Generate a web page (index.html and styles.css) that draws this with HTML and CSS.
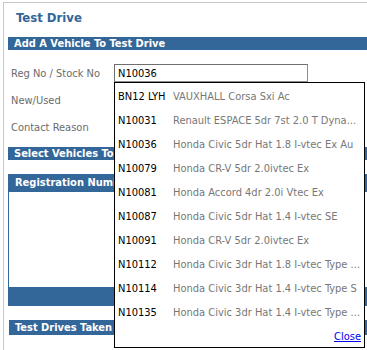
FILE: index.html
```html
<!DOCTYPE html>
<html lang="en">

<head>
    <meta charset="UTF-8">
    <meta name="viewport" content="width=device-width, initial-scale=1.0">
    <title>Test Drive</title>
    <link rel="stylesheet" href="styles.css">
</head>

<body>
    <div class="page">
        <h1 class="title">Test Drive</h1>

        <div class="bar">Add A Vehicle To Test Drive</div>

        <div class="form">
            <div class="row">
                <label class="label">Reg No / Stock No</label>
                <div class="field">
                    <input class="input" type="text" value="N10036">
                    <div class="dropdown">
                        <ul class="list">
                            <li><span class="reg">BN12 LYH</span><span class="desc">VAUXHALL Corsa Sxi Ac</span></li>
                            <li><span class="reg">N10031</span><span class="desc">Renault ESPACE 5dr 7st 2.0 T Dyna...</span></li>
                            <li><span class="reg">N10036</span><span class="desc">Honda Civic 5dr Hat 1.8 I-vtec Ex Au</span></li>
                            <li><span class="reg">N10079</span><span class="desc">Honda CR-V 5dr 2.0ivtec Ex</span></li>
                            <li><span class="reg">N10081</span><span class="desc">Honda Accord 4dr 2.0i Vtec Ex</span></li>
                            <li><span class="reg">N10087</span><span class="desc">Honda Civic 5dr Hat 1.4 I-vtec SE</span></li>
                            <li><span class="reg">N10091</span><span class="desc">Honda CR-V 5dr 2.0ivtec Ex</span></li>
                            <li><span class="reg">N10112</span><span class="desc">Honda Civic 3dr Hat 1.8 I-vtec Type ...</span></li>
                            <li><span class="reg">N10114</span><span class="desc">Honda Civic 3dr Hat 1.4 I-vtec Type S</span></li>
                            <li><span class="reg">N10135</span><span class="desc">Honda Civic 3dr Hat 1.4 I-vtec Type ...</span></li>
                        </ul>
                        <div class="close"><a href="#">Close</a></div>
                    </div>
                </div>
            </div>
            <div class="row">
                <label class="label">New/Used</label>
            </div>
            <div class="row">
                <label class="label">Contact Reason</label>
            </div>
        </div>

        <div class="bar">Select Vehicles To Test Drive</div>

        <div class="panel">
            <div class="panel-head">Registration Number</div>
            <div class="panel-body"></div>
            <div class="panel-foot"></div>
        </div>

        <div class="bar bar-last">Test Drives Taken</div>
    </div>
</body>

</html>
```

FILE: styles.css
```css
* {
    padding: 0;
    margin: 0;
    box-sizing: border-box;
}

body {
    font-family: "DejaVu Sans Condensed", "Liberation Sans", sans-serif;
    font-size: 11px;
    color: #000;
    background-color: #fff;
    overflow: hidden;
}

.page {
    width: 400px;
    height: 360px;
    margin: 2px 0 0 3px;
    padding: 0 0 0 4px;
    border-top: 1px solid #c8c8c8;
    border-left: 1px solid #c8c8c8;
}

.title {
    height: 34px;
    padding: 7px 0 0 8px;
    font-size: 13px;
    font-weight: bold;
    color: #336699;
}

.bar {
    height: 13px;
    line-height: 13px;
    padding-left: 6px;
    font-size: 11px;
    font-weight: bold;
    color: #fff;
    background-color: #336699;
    white-space: nowrap;
}

.form {
    padding: 14px 0 11px 3px;
    display: flex;
    flex-direction: column;
    gap: 9px;
}

.row {
    height: 18px;
    display: flex;
    align-items: center;
}

.label {
    width: 103px;
    color: #6b6b6b;
}

.field {
    position: relative;
}

.input {
    display: block;
    width: 194px;
    height: 18px;
    padding: 0 3px;
    border: 1px solid #8c8c8c;
    border-top-color: #6f6f6f;
    border-left-color: #6f6f6f;
    font-family: inherit;
    font-size: 11px;
    color: #000;
    outline: none;
}

.dropdown {
    position: absolute;
    top: 18px;
    left: 0;
    z-index: 100;
    width: 251px;
    height: 266px;
    padding-top: 1px;
    background-color: #fff;
    border: 1px solid #000;
    font-size: 11px;
}

.list {
    list-style: none;
}

.list li {
    height: 24px;
    display: flex;
    align-items: center;
    padding-left: 3px;
    white-space: nowrap;
    overflow: hidden;
}

.reg {
    width: 55px;
    flex-shrink: 0;
    color: #000;
}

.desc {
    color: #777;
}

.close {
    height: 24px;
    display: flex;
    align-items: center;
    justify-content: flex-end;
    padding-right: 3px;
}

.close a {
    color: #0000ee;
}

.panel {
    margin-top: 14px;
}

.panel-head {
    height: 18px;
    line-height: 18px;
    padding-left: 7px;
    font-size: 11px;
    font-weight: bold;
    color: #fff;
    background-color: #336699;
    white-space: nowrap;
}

.panel-body {
    height: 95px;
    border-left: 1px solid #336699;
}

.panel-foot {
    height: 19px;
    background-color: #336699;
}

.bar-last {
    margin: 14px 0 0 1px;
    height: 15px;
    line-height: 15px;
}
```
